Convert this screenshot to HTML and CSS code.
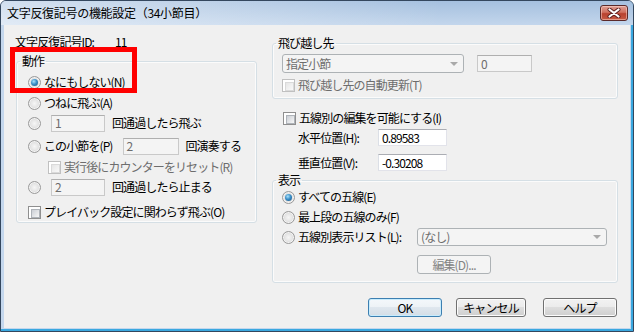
FILE: index.html
```html
<!DOCTYPE html>
<html lang="ja">
<head>
    <meta charset="UTF-8">
    <title>文字反復記号の機能設定</title>
    <link rel="stylesheet" href="styles.css">
</head>
<body>
    <div class="window">
        <div class="titlebar">
            <span class="title">文字反復記号の機能設定（34小節目）</span>
            <div class="close-btn">
                <svg width="14" height="10" viewBox="0 0 14 10">
                    <path d="M2.5 1.5 L11.5 8.5 M11.5 1.5 L2.5 8.5" stroke="#5a1d1d" stroke-width="4" stroke-linecap="round"/>
                    <path d="M2.5 1.5 L11.5 8.5 M11.5 1.5 L2.5 8.5" stroke="#fff" stroke-width="2.2" stroke-linecap="round"/>
                </svg>
            </div>
        </div>

        <div class="client">
            <div class="columns">
                <!-- 左側: 動作 -->
                <div class="col-left">
                    <div class="id-row">
                        <span>文字反復記号ID:</span>
                        <span class="id-value">11</span>
                    </div>

                    <fieldset class="group action-group">
                        <legend>動作</legend>
                        <div class="row row-1">
                            <span class="radio checked"></span>
                            <span>なにもしない(N)</span>
                        </div>
                        <div class="row row-2">
                            <span class="radio"></span>
                            <span>つねに飛ぶ(A)</span>
                        </div>
                        <div class="row row-3">
                            <span class="radio"></span>
                            <span class="textbox disabled count-box">1</span>
                            <span class="after-box">回通過したら飛ぶ</span>
                        </div>
                        <div class="row row-4">
                            <span class="radio"></span>
                            <span>この小節を(P)</span>
                            <span class="textbox disabled play-box">2</span>
                            <span class="after-box">回演奏する</span>
                        </div>
                        <div class="row row-5 indent">
                            <span class="checkbox disabled"></span>
                            <span class="muted">実行後にカウンターをリセット(R)</span>
                        </div>
                        <div class="row row-6">
                            <span class="radio"></span>
                            <span class="textbox disabled count-box">2</span>
                            <span class="after-box">回通過したら止まる</span>
                        </div>
                        <div class="row row-7">
                            <span class="checkbox"></span>
                            <span>プレイバック設定に関わらず飛ぶ(O)</span>
                        </div>
                    </fieldset>

                    <div class="highlight"></div>
                </div>

                <!-- 右側: 飛び越し先 / 表示 -->
                <div class="col-right">
                    <fieldset class="group jump-group">
                        <legend>飛び越し先</legend>
                        <div class="row target-row">
                            <div class="combo disabled target-combo">指定小節</div>
                            <span class="textbox disabled target-box">0</span>
                        </div>
                        <div class="row auto-row">
                            <span class="checkbox disabled"></span>
                            <span class="muted">飛び越し先の自動更新(T)</span>
                        </div>
                    </fieldset>

                    <div class="row staff-edit-row">
                        <span class="checkbox"></span>
                        <span>五線別の編集を可能にする(I)</span>
                    </div>
                    <div class="row pos-row pos-h">
                        <span class="pos-label">水平位置(H):</span>
                        <span class="textbox pos-box">0.89583</span>
                    </div>
                    <div class="row pos-row pos-v">
                        <span class="pos-label">垂直位置(V):</span>
                        <span class="textbox pos-box">-0.30208</span>
                    </div>

                    <fieldset class="group display-group">
                        <legend>表示</legend>
                        <div class="row disp-row">
                            <span class="radio checked"></span>
                            <span>すべての五線(E)</span>
                        </div>
                        <div class="row disp-row">
                            <span class="radio"></span>
                            <span>最上段の五線のみ(F)</span>
                        </div>
                        <div class="row disp-row">
                            <span class="radio"></span>
                            <span>五線別表示リスト(L):</span>
                            <div class="combo disabled list-combo">(なし)</div>
                        </div>
                        <div class="row edit-row">
                            <span class="btn disabled edit-btn">編集(D)...</span>
                        </div>
                    </fieldset>
                </div>
            </div>

            <div class="footer">
                <span class="btn default ok-btn">OK</span>
                <span class="btn cancel-btn">キャンセル</span>
                <span class="btn help-btn">ヘルプ</span>
            </div>
        </div>
    </div>
</body>
</html>
```

FILE: styles.css
```css
* {
    margin: 0;
    padding: 0;
    box-sizing: border-box;
}

body {
    width: 634px;
    height: 332px;
    overflow: hidden;
    font-family: "Noto Sans CJK JP", "Noto Sans", sans-serif;
    font-size: 12px;
    line-height: 14px;
    letter-spacing: -0.9px;
    color: #000;
    background: #fff;
}

/* ---- ウィンドウ枠 ---- */
.window {
    width: 634px;
    height: 332px;
    border: 1px solid #34475e;
    border-radius: 6px 6px 0 0;
    background: #c4d7ed;
    box-shadow: inset -2px -2px 0 #3aa8e0;
    display: flex;
    flex-direction: column;
}

.titlebar {
    height: 24px;
    flex-shrink: 0;
    display: flex;
    align-items: center;
    padding-left: 6px;
    border-radius: 5px 5px 0 0;
    background:
        linear-gradient(to right, rgba(255, 255, 255, 0.5), rgba(255, 255, 255, 0) 70%),
        linear-gradient(to bottom, #a5c0df, #c3d6ec);
}

.title {
    letter-spacing: -0.3px;
}

.close-btn {
    margin-left: auto;
    margin-right: 5px;
    align-self: flex-start;
    margin-top: 4px;
    width: 28px;
    height: 16px;
    border: 1px solid #5b2a2a;
    border-radius: 3px;
    background: linear-gradient(to bottom, #e0a197, #d0705f 45%, #b8412f 55%, #c75b45);
    box-shadow: inset 0 0 0 1px rgba(255, 220, 210, 0.5);
    display: flex;
    align-items: center;
    justify-content: center;
}

.client {
    flex: 1;
    margin: 0 3px 3px 3px;
    background: #f0f0f0;
    padding: 10px 12px 0 11px;
}

.columns {
    display: flex;
    gap: 15px;
}

.col-left {
    width: 242px;
    position: relative;
}

.col-right {
    width: 346px;
}

/* ---- グループボックス ---- */
.group {
    border: 1px solid #d5dfe5;
    border-radius: 3px;
    box-shadow: inset 0 0 0 1px #fbfbfb;
    padding: 0;
}

.group legend {
    margin-left: 3px;
    padding: 0 2px;
    line-height: 14px;
}

.row {
    display: flex;
    align-items: center;
    white-space: nowrap;
}

.muted {
    color: #6d6d6d;
}

/* ---- 左 ---- */
.id-row {
    height: 14px;
    display: flex;
}

.id-value {
    margin-left: 21px;
}

.action-group {
    margin-top: 5px;
    margin-left: 1px;
    width: 241px;
    padding-top: 4px;
}

.action-group .row {
    padding-left: 11px;
}

.row-1 { height: 20px; }
.row-2 { height: 20px; margin-top: 1px; }
.row-3 { height: 20px; }
.row-4 { height: 18px; margin-top: 4px; }
.row-5 { height: 20px; margin-top: 2px; }
.row-6 { height: 18px; margin-top: 1px; }
.row-7 { height: 20px; margin-top: 6px; }

.action-group .row.indent {
    padding-left: 31px;
}

.count-box {
    width: 54px;
    margin-left: 7px;
}

.play-box {
    width: 56px;
    margin-left: 10px;
}

.after-box {
    margin-left: 7px;
}

.highlight {
    position: absolute;
    left: -5px;
    top: 12px;
    width: 127px;
    height: 46px;
    border: 5px solid #ff0000;
    pointer-events: none;
}

/* ---- 右 ---- */
.jump-group {
    margin-top: 1px;
    padding: 4px 0 4px 0;
}

.jump-group .row,
.display-group .row {
    padding-left: 9px;
}

.target-row {
    height: 19px;
    gap: 13px;
}

.target-combo {
    width: 182px;
}

.target-box {
    width: 55px;
}

.auto-row {
    height: 18px;
    margin-top: 3px;
}

.staff-edit-row {
    height: 18px;
    margin-top: 10px;
    padding-left: 11px;
}

.pos-row {
    height: 19px;
    padding-left: 26px;
}

.pos-h { margin-top: 1px; }
.pos-v { margin-top: 6px; }

.pos-label {
    width: 80px;
}

.pos-box {
    width: 69px;
    height: 19px;
}

.display-group {
    margin-top: 1px;
    padding: 0 10px 8px 0;
}

.disp-row {
    height: 20px;
}

.list-combo {
    width: 190px;
    margin-left: auto;
}

.display-group .edit-row {
    margin-top: 8px;
    padding-left: 144px;
}

.edit-btn {
    width: 74px;
}

/* ---- コントロール ---- */
.radio {
    flex-shrink: 0;
    width: 13px;
    height: 13px;
    margin-right: 3px;
    border-radius: 50%;
    border: 1px solid #9a9a9a;
    background: radial-gradient(circle at 50% 50%, #f6f6f6 0%, #e6e6e6 45%, #cfcfcf 80%);
    box-shadow: inset 0 0 0 1px #f4f4f4;
    position: relative;
}

.radio.checked::after {
    content: "";
    position: absolute;
    left: 2px;
    top: 2px;
    width: 7px;
    height: 7px;
    border-radius: 50%;
    background: radial-gradient(circle at 40% 35%, #a9e2fb 0%, #3b8fc8 45%, #17507f 100%);
}

.checkbox {
    flex-shrink: 0;
    width: 13px;
    height: 13px;
    margin-right: 3px;
    border: 1px solid #8f8f8f;
    background: #fff;
    padding: 2px;
}

.checkbox::after {
    content: "";
    display: block;
    width: 7px;
    height: 7px;
    border: 1px solid #aeb3b9;
    background: linear-gradient(135deg, #cbcfd5, #f7f7f7);
}

.checkbox.disabled {
    border-color: #c0c0c0;
}

.checkbox.disabled::after {
    border-color: #dadada;
    background: linear-gradient(135deg, #e6e6e6, #f9f9f9);
}

.textbox {
    height: 17px;
    display: flex;
    align-items: center;
    padding-left: 3px;
    background: #fff;
    border: 1px solid #e2e3ea;
    border-top-color: #abadb3;
    border-left-color: #dbdfe6;
}

.textbox.disabled {
    background: #f4f4f4;
    color: #6d6d6d;
    border-color: #c9c9c9;
    border-top-color: #afafaf;
}

.combo {
    height: 19px;
    display: flex;
    align-items: center;
    justify-content: space-between;
    padding: 0 5px 0 3px;
    border: 1px solid #adb2b5;
    border-radius: 3px;
    background: #f4f4f4;
    color: #6d6d6d;
}

.combo::after {
    content: "";
    border-left: 4px solid transparent;
    border-right: 4px solid transparent;
    border-top: 4px solid #a9a9a9;
}

.list-combo {
    height: 18px;
}

.btn {
    height: 19px;
    display: flex;
    align-items: center;
    justify-content: center;
    border: 1px solid #707070;
    border-radius: 3px;
    background: linear-gradient(to bottom, #f2f2f2 0%, #ebebeb 50%, #dddddd 50%, #cfcfcf 100%);
    box-shadow: inset 0 0 0 1px #fcfcfc;
}

.btn.default {
    border-color: #3c7fb1;
    box-shadow: inset 0 0 0 1px #c8ecfd;
    background: linear-gradient(to bottom, #f4f8fb 0%, #edf2f6 50%, #dfe7ee 50%, #d4dde6 100%);
}

.btn.disabled {
    border-color: #adb2b5;
    background: #f4f4f4;
    box-shadow: none;
    color: #838383;
}

/* ---- 下部ボタン ---- */
.footer {
    display: flex;
    justify-content: flex-end;
    margin-top: 15px;
    padding-right: 1px;
}

.ok-btn { width: 74px; }
.cancel-btn { width: 70px; margin-left: 14px; }
.help-btn { width: 74px; margin-left: 17px; }
```
